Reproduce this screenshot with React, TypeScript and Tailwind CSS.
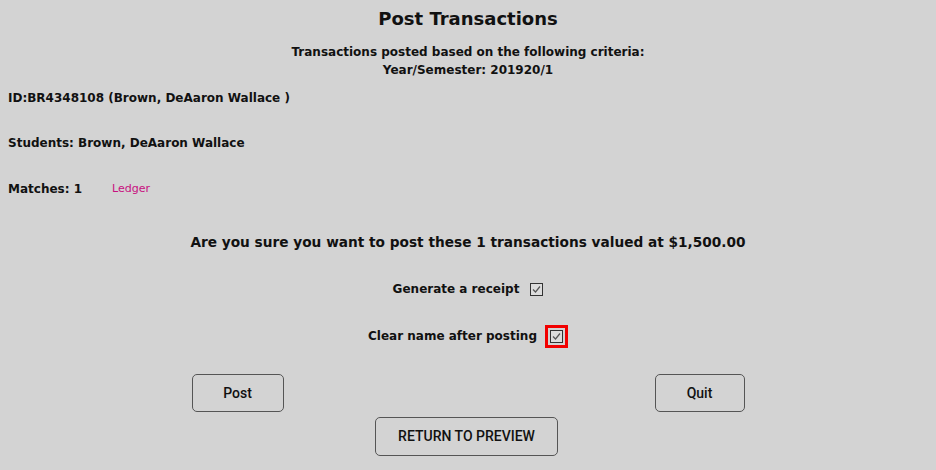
import React, { useState } from 'react';

const Check: React.FC<{ checked: boolean; onToggle: () => void }> = ({ checked, onToggle }) => (
  <button
    onClick={onToggle}
    className="w-[13px] h-[13px] border border-[#333] bg-[#dcdcdc] flex items-center justify-center p-0"
  >
    {checked && (
      <svg width="11" height="11" viewBox="0 0 11 11">
        <path d="M2 5.5 L4.5 8 L9 2.5" fill="none" stroke="#555" strokeWidth="1.2" />
      </svg>
    )}
  </button>
);

export default function App() {
  const [receipt, setReceipt] = useState(true);
  const [clearName, setClearName] = useState(true);

  return (
    <div className="w-[936px] h-[470px] bg-[#d3d3d3] text-[#111] font-['DejaVu_Sans',sans-serif] overflow-hidden">
      {/* Header */}
      <h1 className="text-center text-[18px] font-bold pt-[6px] leading-[26px]">Post Transactions</h1>
      <div className="text-center text-[12px] font-bold leading-[18px] mt-[11px]">
        <p>Transactions posted based on the following criteria:</p>
        <p>Year/Semester: 201920/1</p>
      </div>

      {/* Student info */}
      <div className="px-2 text-[12px] font-bold">
        <p className="mt-[10px] leading-[18px]">ID:BR4348108 (Brown, DeAaron Wallace )</p>
        <p className="mt-[27px] leading-[18px]">Students: Brown, DeAaron Wallace</p>
        <div className="mt-[28px] flex items-center leading-[18px]">
          <span className="w-[104px]">Matches: 1</span>
          <a href="#" className="text-[11px] font-normal text-[#c8107f]">Ledger</a>
        </div>
      </div>

      {/* Confirm */}
      <p className="text-center text-[13.7px] font-bold mt-[32px] leading-[24px]">
        Are you sure you want to post these 1 transactions valued at $1,500.00
      </p>

      <div className="flex flex-col items-center text-[12px] font-bold mt-[23px]">
        <div className="flex items-center gap-[11px] h-[24px]">
          <span>Generate a receipt</span>
          <Check checked={receipt} onToggle={() => setReceipt(!receipt)} />
        </div>
        <div className="flex items-center gap-[8px] h-[24px] mt-[23px]">
          <span>Clear name after posting</span>
          <div className="border-[3px] border-[#f20000] p-[2px]">
            <Check checked={clearName} onToggle={() => setClearName(!clearName)} />
          </div>
        </div>
      </div>

      {/* Actions */}
      <div className="flex justify-center gap-[371px] mt-[26px] font-['Roboto',sans-serif] font-medium text-[14px]">
        <button className="w-[92px] h-[38px] border border-[#555] rounded-[5px]">Post</button>
        <button className="w-[90px] h-[38px] border border-[#555] rounded-[5px]">Quit</button>
      </div>
      <div className="flex justify-center mt-[5px] font-['Roboto',sans-serif] font-medium text-[14px] pr-[3px]">
        <button className="w-[183px] h-[39px] border border-[#555] rounded-[5px]">RETURN TO PREVIEW</button>
      </div>
    </div>
  );
}
